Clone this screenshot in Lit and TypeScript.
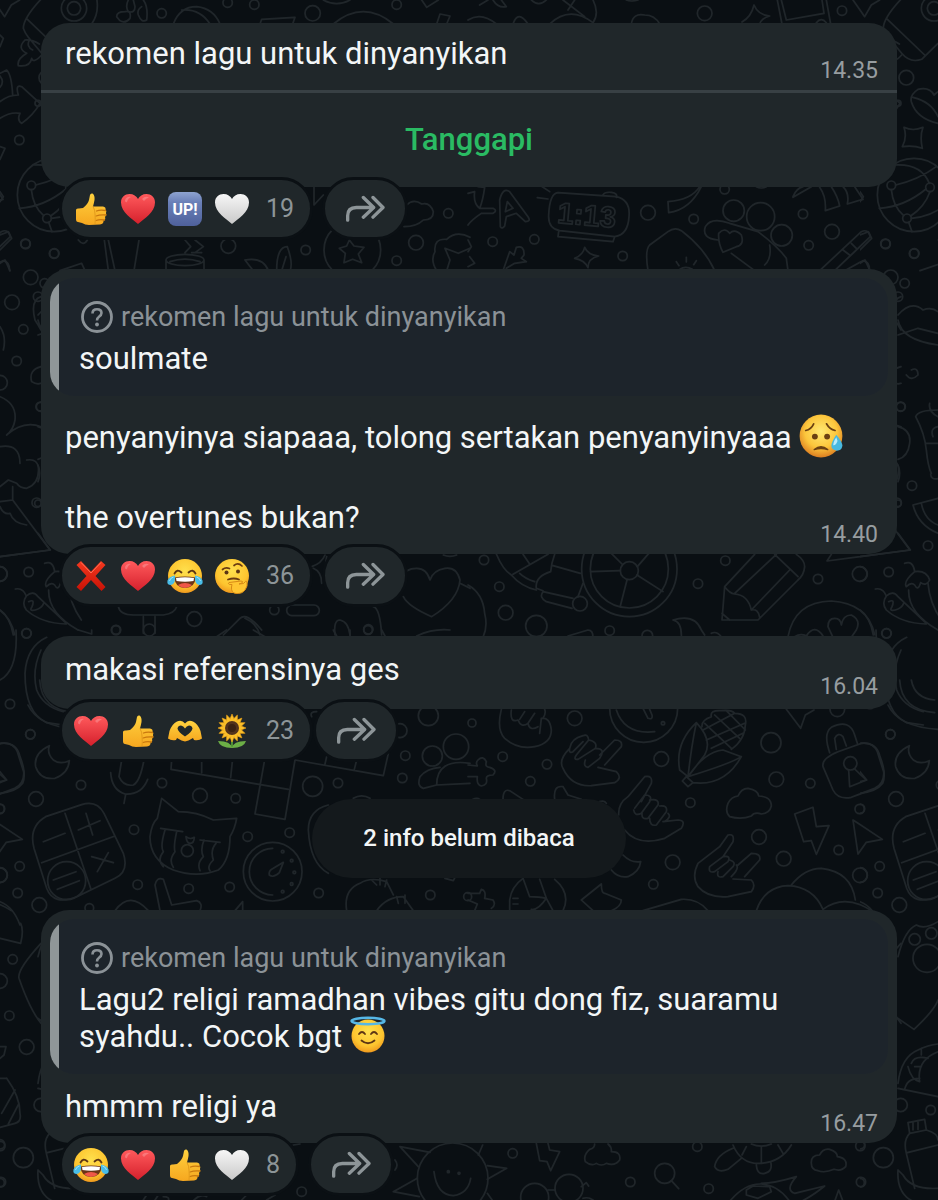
import { LitElement, html, svg, css, nothing } from "lit";
import { customElement, property } from "lit/decorators.js";

type Circle = [number, number, number];
interface DoodleSheet {
  x: number;
  y: number;
  circles: Circle[];
  paths: string[];
}

/* Line drawings of the chat wallpaper, in thirds of a pixel from each sheet's origin. */
const SHEETS: DoodleSheet[] = [
  {
    x: 0,
    y: 0,
    circles: [
      [222, 25, 38], [222, 25, 20], [485, 40, 14], [683, 8, 14], [763, 14, 14], [938, 40, 23], [1190, 14, 14],
      [58, 420, 14], [77, 732, 14], [163, 760, 14], [685, 738, 22], [917, 750, 14], [1248, 728, 22],
      [1190, 782, 14], [1345, 640, 14], [1057, 750, 85],
    ],
    paths: [
      "M140 -20 Q70 50 70 85 Q75 100 85 112 L125 160 Q150 190 185 178 L234 130 M79 55 L194 165 M290 -5 Q298 40 275 72",
      "M75 120 Q50 145 80 160 Q50 178 55 197 Q90 202 95 175 Q100 192 125 165 M88 120 Q78 140 98 150 M75 120 Q95 118 118 132",
      "M350 50 Q350 35 375 35 Q395 30 390 55 Q375 72 360 62Z M385 0 Q375 20 385 35 Q405 40 405 20 L400 0 M430 0 Q445 20 440 60 Q425 70 415 45 Q410 30 425 20",
      "M520 72 Q540 20 590 20 Q640 25 660 72 M545 30 Q600 25 630 72 M780 72 L785 58 L885 52 L878 72",
      "M970 0 Q1010 22 1050 0 M1000 72 Q1090 -2 1180 72 M1265 0 L1280 22 L1315 0 M1310 72 L1320 42 L1350 48 L1340 72",
      "M0 105 L10 115 L0 140 M0 220 L20 210 Q35 225 38 285 M0 228 Q14 245 0 262 M0 305 Q25 285 55 285 Q45 252 65 260 L120 310 Q100 345 65 370 Q50 360 60 340 Q30 335 0 355",
      "M0 440 L15 445 L0 478 M0 575 L10 590 L0 605 M0 705 L25 695 L35 715 L0 750 M235 720 Q250 740 262 720",
      "M313 720 L325 812 M325 720 L345 812 M417 720 L402 812 M180 812 L245 790 L255 812 M0 790 L15 780 L30 812",
      "M498 780 A57 17 0 0 1 612 780 A57 17 0 0 1 498 780 V812 M612 780 V812 M510 785 Q555 770 600 785 M555 720 L572 740 L555 758 M585 720 L610 740 L585 758 M575 758 H605",
      "M735 780 Q790 770 805 812 M735 780 Q750 800 760 812 M830 812 Q830 740 862 740 Q880 790 870 812 M845 812 L858 770",
      "M1048 720 L1062 738 L1092 742 L1075 762 L1085 788 L1058 778 L1032 788 L1036 760 L1018 745 L1040 738Z M942 562 V615 L970 585",
      "M1212 680 Q1250 680 1270 660 Q1300 660 1300 635 Q1290 605 1265 612 Q1240 595 1220 615",
      "M1310 812 Q1290 780 1305 755 Q1300 715 1340 718 Q1370 690 1410 712 M1340 812 L1350 780 L1335 745 L1375 760 L1410 745",
    ],
  },
  {
    x: 468,
    y: 0,
    circles: [
      [710, 40, 22], [1122, 32, 14], [1315, 233, 22], [1290, 310, 9], [1338, 585, 110], [1270, 556, 13],
      [1386, 562, 13], [1317, 655, 13], [540, 638, 22], [677, 657, 14], [770, 568, 14], [797, 632, 32],
      [878, 650, 42], [941, 706, 32], [1005, 642, 14], [1092, 695, 22], [1022, 736, 14], [1252, 731, 14],
      [1338, 761, 14], [464, 768, 14], [74, 725, 14], [199, 718, 14], [1310, 850, 14], [1290, 890, 14],
    ],
    paths: [
      "M75 0 Q90 25 115 20 L100 0 M35 15 L60 0 M0 60 Q40 35 85 72 M135 72 Q150 28 180 72 M190 0 Q212 22 235 0 M245 72 Q305 15 375 68 Q395 40 375 0 M285 0 L350 50 M300 30 L320 0",
      "M490 72 Q495 38 530 45 Q560 45 575 72 M475 0 Q490 6 510 0 M858 15 Q870 45 905 48 Q880 55 875 72 M858 15 Q850 50 822 66",
      "M928 0 L942 72 M940 0 L955 60 L1068 40 L1062 0 M1075 0 L1088 72 M1045 68 q15 -18 30 0 M1155 0 L1190 50 L1210 15 L1235 0",
      "M1410 275 L1398 285 Q1385 260 1350 268 Q1325 285 1330 305 Q1345 355 1410 370 M1335 292 Q1390 305 1410 350",
      "M1308 382 Q1335 395 1365 382 Q1355 410 1363 445 Q1335 435 1303 440 Q1318 412 1308 382Z",
      "M1283 555 Q1350 540 1405 500 M1270 569 Q1275 620 1307 647 M1386 575 Q1370 620 1328 648 M1234 625 Q1310 620 1374 567 M1280 495 Q1360 490 1384 550 M1322 667 L1332 695 M1330 655 Q1390 650 1440 610",
      "M0 580 L20 575 Q15 610 35 625 L75 625 Q90 632 75 640 L40 640 Q10 660 0 675 M30 560 L50 562 Q45 600 35 625",
      "M97 680 L95 600 Q105 560 125 575 L180 650 Q190 665 172 665 L145 640 L115 650 L110 678 Q103 688 97 680Z M118 605 L112 635 L135 625Z M215 555 L245 575 M208 593 L240 597",
      "M270 578 L445 590 Q488 600 483 650 Q480 705 440 710 L275 692 Q240 685 242 645 Q245 580 270 578Z M272 695 L270 710 L435 725 L440 710 M405 585 Q410 575 430 577 Q450 580 445 592",
      "M600 605 Q670 600 695 560 M600 605 L602 638 Q665 630 700 560 M975 590 Q985 565 1005 560 M975 592 L1030 560",
      "M1055 562 Q1075 590 1072 632 L1115 618 Q1110 590 1090 560 M1125 560 Q1145 580 1138 612 L1185 598 Q1170 575 1160 560 M865 560 Q880 568 895 560",
      "M540 812 Q530 750 545 735 L600 695 Q620 680 640 692 Q710 745 740 812 M625 785 l8 12 M655 772 v14 M685 782 l-8 12 M635 808 q18 -12 38 0",
      "M750 720 Q700 715 712 680 Q730 650 785 670 L870 695 Q930 740 955 775 L960 812 M765 757 Q750 730 752 700 Q770 680 785 700 Q800 685 820 705 Q830 735 805 740 Z M790 760 L860 812 M905 735 Q912 775 890 795",
      "M1055 812 L1180 695 Q1200 685 1207 710 L1100 812 M1125 750 L1145 765 M1150 730 L1165 745 M1130 812 L1185 782 Q1205 785 1205 812",
      "M0 720 L10 740 L0 755 M105 812 L125 755 L138 765 L145 742 Q170 735 168 765 L160 775 L175 785 L140 790 L115 805 M5 770 L20 790 L0 800",
      "M350 742 Q360 765 392 768 Q360 775 360 803 Q350 780 320 775 Q345 765 350 742Z",
      "M1290 945 Q1330 900 1365 930 Q1390 920 1410 935 M1290 960 Q1300 1020 1410 1035 M1290 1005 L1350 985 L1410 1000 M1330 1110 q20 -10 20 15 q-20 20 -35 0",
    ],
  },
  {
    x: 0,
    y: 270,
    circles: [
      [92, 22, 22], [36, 97, 22], [70, 178, 14], [50, 273, 14], [0, 338, 22], [122, 410, 13], [110, 698, 14],
      [0, 912, 22], [583, 1047, 22], [823, 1020, 14], [348, 1080, 14], [1105, 1078, 14],
    ],
    paths: [
      "M0 170 Q20 200 10 240 M0 380 Q50 400 45 450 Q40 480 20 495 Q70 450 123 470 M0 530 Q60 520 60 580 M80 570 Q110 565 115 590 Q120 640 80 655 Q60 655 50 640 L25 630 L0 650",
      "M38 650 V690 L150 840 L0 860 M0 695 L38 690 M0 710 Q10 735 30 730 Q40 760 80 765 M123 80 Q90 90 105 150 Q115 165 123 180 M123 290 Q85 300 95 335 Q110 345 123 340",
      "M355 1010 Q360 1035 400 1035 H490 Q525 1030 530 1010 M430 1040 V1090 M465 1040 V1090 M670 1095 L720 1045 Q740 1025 785 1080 M735 1045 Q770 1060 780 1095",
      "M876 1005 H942 A16 16 0 0 1 942 1037 H876 A16 16 0 0 1 876 1005Z M935 890 Q965 880 975 855 M940 895 Q965 905 965 940 M980 860 Q972 900 985 940",
      "M1120 1010 Q1140 1015 1145 1095 M1005 1095 Q1000 1050 1020 1050 Q1045 1055 1050 1095",
      "M1210 980 Q1225 1010 1295 1040 Q1375 990 1380 930 Q1370 890 1335 895 Q1300 900 1290 930 Q1280 895 1250 895 Q1215 895 1210 920 M1380 940 L1410 955 M1330 855 q20 8 40 0 M0 1020 Q30 1040 40 1095",
    ],
  },
  {
    x: 468,
    y: 400,
    circles: [
      [48, 480, 14], [94, 560, 14], [113, 638, 22], [205, 678, 32], [690, 551, 14], [772, 482, 14],
      [1050, 537, 14], [1175, 522, 22], [1262, 516, 14], [1380, 437, 14], [1332, 257, 14], [1298, 20, 14],
      [1290, 310, 10], [425, 692, 14], [538, 707, 16], [1255, 700, 14], [484, 512, 27], [484, 507, 143],
      [484, 507, 117], [336, 611, 22],
    ],
    paths: [
      "M457 512 L368 515 M508 500 L560 440 M507 525 L585 575 M477 540 L457 618 M462 492 L430 460",
      "M85 462 Q105 510 130 525 Q160 560 205 570 M135 523 L240 463 M165 463 L185 492 M155 520 Q170 535 200 545 M260 463 Q250 490 248 515 Q200 530 205 565 L225 572 M255 497 L337 520 M345 550 L330 590 M225 575 L315 595 M235 605 L312 625 M225 575 Q212 592 235 605",
      "M0 555 Q45 580 50 640 Q60 680 45 712 M300 708 L360 690 Q375 690 375 712 M615 660 Q680 640 700 690 L710 705 M615 660 Q642 665 640 712 M730 700 Q745 692 760 710",
      "M860 463 L770 560 L762 660 H870 Q930 600 990 540 M925 463 L800 580 M965 510 L850 630 M985 463 Q1010 480 1010 500 Q1008 525 990 540 M920 463 L990 530 M770 560 Q785 580 800 582 Q840 585 850 630 Q870 625 875 652 M762 640 L785 660",
      "M960 710 Q980 605 1090 603 Q1200 610 1220 704 M1095 712 L1080 680 Q1080 655 1100 655 Q1118 655 1120 675 Q1125 645 1150 645 Q1180 660 1165 690 L1150 712 M1015 708 Q1040 670 1065 708 M980 710 q20 -12 40 0",
      "M1290 400 L1327 450 L1077 483 L1090 463 M1410 295 L1335 315 Q1350 375 1410 400 M1360 310 Q1370 360 1410 375",
      "M1410 30 Q1350 30 1343 50 Q1370 100 1375 150 Q1380 200 1390 220 M1385 10 Q1380 35 1410 50 M1375 130 H1410 M1388 222 q0 18 22 14 M1410 80 q-25 5 -15 30 M1290 80 Q1330 90 1325 130 Q1320 170 1290 178 M1290 195 q10 25 0 50",
      "M1310 490 Q1335 480 1340 515 Q1305 545 1315 560 Q1330 545 1340 555 Q1350 575 1358 548 Q1375 560 1385 540 Q1375 510 1340 515 M1322 570 Q1320 640 1410 690 M1380 550 Q1385 610 1420 660",
      "M1222 567 Q1245 562 1255 588 Q1240 610 1255 630 Q1300 670 1375 672 M1255 588 Q1275 570 1290 590 L1375 670 M1262 605 q20 -10 10 15 q-10 15 10 10 q20 -5 25 -20",
    ],
  },
  {
    x: 0,
    y: 630,
    circles: [
      [80, 10, 14], [30, 222, 14], [91, 313, 14], [243, 465, 14], [108, 507, 22], [486, 459, 14], [600, 497, 22],
      [707, 505, 14], [402, 599, 14], [743, 620, 14], [869, 608, 14], [938, 469, 30], [1014, 459, 14],
      [1207, 444, 14], [1216, 377, 14], [1285, 257, 30], [1200, 302, 21], [0, 735, 22],
      [53, 789, 14], [413, 764, 14], [566, 776, 14], [689, 771, 14], [956, 789, 14],
      [1291, 795, 14], [1403, 800, 12], [0, 536, 14], [268, 834, 13], [348, 0, 13], [448, 0, 18], [1104, 0, 13],
      [200, 752, 57], [562, 662, 18], [818, 725, 88], [1297, 378, 30], [1368, 350, 38],
      [848, 665, 4], [875, 692, 4], [883, 727, 4], [875, 762, 4], [848, 785, 4],
    ],
    paths: [
      "M48 0 Q55 120 0 150 M140 22 Q80 50 75 130 Q75 250 140 278 L190 285 M123 60 Q95 120 110 180 Q130 230 190 245 M235 0 L275 12 V0 M650 20 L680 0 M760 0 L795 20 M1000 0 L1010 18 M1050 0 V18 M1145 0 L1155 18 M1250 18 Q1300 -5 1350 0",
      "M148 347 Q100 370 107 410 Q120 450 165 445 Q205 430 208 392 Q180 405 160 390 Q140 370 148 347Z M0 340 Q50 335 60 380 Q80 430 68 460 Q50 485 0 490 M0 425 L20 450 L0 455",
      "M365 390 L357 440 Q370 470 400 465 Q420 455 432 390 M332 428 Q335 480 375 492 Q425 495 443 448 M377 493 L372 520",
      "M137 560 L245 524 Q290 510 312 550 L370 670 Q388 725 345 745 L235 798 Q160 830 140 775 L102 655 Q85 590 137 560Z M195 550 L272 775 M125 698 L345 618 M130 635 L195 610 M235 600 L300 572 M258 550 L278 615 M275 680 L340 698 M325 668 L292 725 M160 750 L228 725 M172 778 L238 752",
      "M485 505 L535 545 Q590 545 640 570 L710 565 Q705 595 690 620 Q690 690 655 720 Q590 745 520 720 Q450 690 450 620 Q455 580 472 565Z M482 595 L548 605 M600 630 L660 637",
      "M495 600 Q480 650 490 665 Q470 690 490 710 M530 605 Q520 650 525 665 Q505 690 520 712 M612 630 Q600 660 610 680 Q590 700 600 722 M648 640 Q630 660 640 690 Q620 710 630 722 M558 620 Q570 630 583 622 Q582 640 570 640 Q560 640 558 620Z",
      "M515 390 L513 418 L865 478 M605 395 V428 M697 395 L692 442 M793 395 L765 552 L855 568 L885 390 L1150 437 L1165 370 M980 380 L975 402 M1070 390 L1063 418",
      "M818 655 A70 70 0 0 0 818 795 M850 697 L838 728 Q820 745 808 735 Q805 722 820 715Z M925 600 Q925 540 985 525 M925 600 Q930 700 985 730",
      "M480 842 L465 765 Q470 740 490 748 L515 825 L590 812 Q610 818 600 842 M345 842 Q390 780 445 842 M705 842 L728 815 V842",
      "M1040 842 Q1030 780 1080 760 Q1110 740 1160 755 L1180 795 M1130 842 Q1160 800 1210 800 L1240 842 M1115 750 L1130 765 M1140 745 V765 M1160 750 L1155 770 M1190 800 L1195 820 M1215 795 V820 M1335 745 L1360 752 L1365 742",
      "M1410 400 Q1310 385 1310 465 L1410 460 M1310 465 L1270 475 Q1250 470 1260 440 Q1280 415 1320 412 M0 815 Q40 830 60 885 M935 260 Q928 245 950 245 M1060 505 q25 -15 50 0",
    ],
  },
  {
    x: 468,
    y: 680,
    circles: [
      [12, 129, 12], [104, 230, 14], [237, 253, 14], [187, 304, 14], [320, 115, 22], [580, 237, 22], [667, 368, 14],
      [909, 188, 30], [925, 298, 22], [1027, 310, 14], [1267, 163, 14], [1175, 387, 14],
      [873, 471, 22], [947, 536, 22], [614, 547, 22], [556, 613, 14], [1112, 510, 14], [1176, 586, 22],
      [1235, 559, 14], [1294, 675, 22], [527, 85, 102], [585, 130, 5], [1108, 88, 22], [1147, 250, 20],
    ],
    paths: [
      "M100 88 Q85 150 110 175 Q150 210 200 200 Q250 190 250 150 Q245 110 220 115 L215 160 M130 90 Q125 130 150 120 Q160 145 180 130 Q185 155 210 140 M155 118 L170 95 M180 130 L200 100 M230 88 Q235 100 225 115",
      "M305 205 Q270 240 285 265 Q310 320 370 317 L440 308 Q465 295 445 275 L390 262 M395 225 L440 180 Q465 180 460 200 L410 255 M305 205 Q310 175 345 167 Q360 160 362 180 Q390 185 382 205 Q415 205 395 235 L360 262 Q345 260 352 240 M362 180 L325 225 Q315 240 330 238 L382 205 M345 185 L315 215 Q302 222 305 205",
      "M452 405 Q450 370 480 350 L530 290 Q555 285 550 310 L520 365 M470 450 Q510 500 590 475 L640 445 Q655 420 630 420 L585 425 M500 385 L530 345 Q555 345 545 365 L520 400 Q500 410 497 390 M545 360 Q575 355 570 375 L540 415 Q520 420 522 400 M575 378 Q600 375 595 395 L565 435 Q545 440 545 415 M600 400 Q612 410 590 425",
      "M755 500 L780 465 Q800 460 795 485 L765 530 M755 500 L690 550 Q670 590 690 620 Q720 655 780 650 L850 635 Q865 615 850 600 L795 597 M810 555 L850 520 Q880 520 875 540 L830 590 M765 530 Q790 525 780 545 L740 575 Q720 580 725 560Z M785 540 Q805 545 795 560 L765 590 Q745 595 750 575 M805 555 Q815 565 790 590",
      "M30 240 Q45 225 55 245 Q50 262 65 262 Q90 270 75 285 Q55 285 55 295 Q60 315 40 318 Q25 315 28 290 L0 290 M0 255 L28 258 Q22 248 30 240",
      "M685 128 Q620 190 635 270 L660 290 Q670 200 685 128Z M685 128 Q735 180 710 225 L660 290 Q710 215 765 210 L820 230 Q790 250 660 290 M820 230 Q770 320 675 308 L655 290 L643 303 L660 320 L675 308",
      "M702 140 Q700 120 730 110 Q725 90 760 92 Q790 88 800 100 Q840 100 832 135 Q830 180 790 208 M705 150 L800 100 M715 180 L830 130 M730 205 L825 160 M710 130 L790 205 M740 105 L815 175 M775 92 L832 150",
      "M955 88 L998 145 L1012 105 L1038 90 M1110 215 L1180 190 Q1215 185 1228 215 L1247 275 Q1250 310 1220 325 L1150 352 Q1110 360 1095 330 L1065 260 Q1060 235 1110 215Z",
      "M1085 218 Q1065 160 1090 142 Q1145 115 1160 165 L1168 190 M1105 208 L1100 175 Q1110 155 1125 170 L1135 198 M1142 270 L1145 320 L1195 300 L1160 267",
      "M1260 75 Q1290 140 1410 148 M1295 0 Q1300 90 1400 98 M1330 0 Q1340 55 1400 60 M445 90 Q470 165 560 155 M525 85 L540 115 Q555 120 552 105 L545 88",
      "M1155 420 L1243 478 L1195 487 L1170 522Z M980 402 L1035 382 L1045 440 L1083 437 L1045 523 L1030 482 L1007 485Z",
      "M780 370 Q790 350 810 348 Q820 325 840 325 Q870 330 872 348 Q910 350 910 378 Q905 400 880 402 Q860 395 850 408 Q820 420 785 410 Q770 395 780 370Z M430 570 Q450 595 480 590 Q515 575 518 545 Q490 550 465 525",
      "M105 358 Q105 325 125 332 L165 358 M260 358 Q255 315 285 320 L300 345 L340 358 M395 365 q15 -5 20 5 M15 358 q12 -6 20 0",
      "M0 640 L35 640 L40 628 Q55 630 50 655 L75 660 Q85 675 70 685 M0 660 L28 672 L20 692 M165 595 Q130 620 125 660 V692 M165 595 L185 650 Q215 650 235 655 L255 692 M215 598 L235 655 Q210 692 190 688 M260 598 Q310 640 285 692 M135 655 h15 M135 672 h15",
      "M340 660 L400 612 Q400 640 410 640 L460 660 Q460 680 430 692 M340 660 L375 692 M525 692 L640 658 Q690 655 720 692 M865 692 Q890 620 960 617 Q1035 620 1065 688 Q1130 640 1210 692 M970 615 Q1010 565 1060 565 Q1150 575 1162 660",
    ],
  },
  {
    x: 0,
    y: 900,
    circles: [
      [38, 178, 14], [0, 243, 22], [28, 347, 14], [80, 441, 22], [0, 733, 14], [0, 848, 13],
      [905, 875, 14], [1358, 835, 106], [1345, 815, 3], [1377, 820, 3],
    ],
    paths: [
      "M62 70 Q72 90 62 130 L0 115 M123 130 Q50 210 57 235 Q90 330 123 370 M0 440 H18 L12 465 L0 475 M20 535 Q60 590 60 640 Q65 665 45 670 L0 682 M0 535 L20 535 M45 570 L5 640 M57 610 L25 672",
      "M430 900 L440 885 M465 900 L475 885 M490 890 q20 0 15 12 M580 902 Q600 880 620 890 M725 900 L740 885 M800 900 L825 885",
      "M1200 740 L1290 757 M1200 740 L1255 800 M1180 875 L1252 835 M1180 875 L1258 890 M1462 797 L1520 805 L1462 838 M1435 765 L1448 735 M1462 880 L1480 905 M1302 815 Q1310 885 1360 887 Q1405 880 1412 835 M1185 780 q12 15 0 30 M880 735 l20 -3",
    ],
  },
  {
    x: 468,
    y: 900,
    circles: [
      [134, 760, 14], [688, 740, 14], [487, 846, 14], [722, 866, 14], [1177, 738, 14], [1179, 846, 14],
      [1246, 773, 30], [1388, 630, 14], [1340, 118, 17], [1390, 100, 17], [1377, 175, 42], [1298, 615, 20],
      [590, 820, 30], [200, 892, 42], [303, 865, 42],
    ],
    paths: [
      "M205 730 L215 782 L237 785 L248 812 L275 755 L245 750 L240 730 M380 732 Q380 745 365 748 Q345 765 352 785 Q370 800 385 790 Q400 800 415 790 Q440 800 455 780 Q460 755 430 755 Q432 742 420 732",
      "M1030 790 Q1028 765 1055 765 Q1065 745 1085 748 Q1108 755 1108 770 Q1140 775 1133 800 Q1120 815 1098 808 Q1070 820 1050 812 Q1030 810 1030 790Z M610 842 L632 866",
      "M795 735 Q820 795 880 790 Q940 785 970 735 M740 800 Q745 765 795 745 M740 800 Q750 820 780 808 L820 775 M865 790 Q865 825 890 820 Q915 815 908 785 M880 740 V790 M850 732 Q880 745 910 732 M930 735 L945 760 M835 740 L822 765",
      "M240 870 L262 870 M340 860 L355 848 L362 858 M345 895 Q360 890 375 900 M785 904 Q830 850 880 852 Q930 855 965 904 M835 870 L855 858 L905 860 L910 875 L870 895 L835 885Z",
      "M880 850 Q920 850 985 830 Q950 870 980 880 L1070 858 Q1030 890 1000 904 M1100 904 L1112 870 L1125 904 M1290 170 Q1310 90 1345 75 Q1370 90 1410 65 M1290 355 L1338 388 Q1400 330 1410 300",
      "M1290 550 Q1300 470 1350 450 Q1380 435 1410 432 M1360 445 V465 M1330 490 Q1340 465 1380 475 M1320 500 Q1330 540 1355 545 Q1345 480 1410 455 M1290 565 L1410 590 M1310 570 Q1315 535 1355 535 M1340 500 h20",
      "M1320 668 L1370 658 L1375 690 L1325 700Z M1335 665 V690 M1350 662 V688 M1325 700 Q1305 720 1315 760 L1340 865 M1375 690 Q1410 700 1410 720 M1318 758 L1410 735 M1290 810 L1305 825 Q1330 870 1410 865 M1290 810 Q1285 890 1350 910",
    ],
  },
];

@customElement("chat-wallpaper")
class ChatWallpaper extends LitElement {
  static styles = css`
    :host {
      display: block;
    }
    .canvas {
      display: block;
      width: 100%;
      height: 100%;
    }
    .ink {
      fill: none;
      stroke: #20262a;
      stroke-width: 5;
      stroke-linecap: round;
      stroke-linejoin: round;
    }
    .digits {
      font: 700 88px "Liberation Sans", Arial, sans-serif;
    }
  `;

  render() {
    return html`<svg class="canvas" aria-hidden="true">
      <defs>
        <pattern id="doodles" width="860" height="1200" patternUnits="userSpaceOnUse">
          <g id="sheet" class="ink">
            ${SHEETS.map(
              (s) => svg`<g transform=${`translate(${s.x} ${s.y}) scale(0.33333)`}>
                ${s.circles.map(([x, y, r]) => svg`<circle cx=${x} cy=${y} r=${r}></circle>`)}
                <path d=${s.paths.join(" ")}></path>
              </g>`
            )}
            <g transform="translate(468 0) scale(0.33333)">
              <text class="digits" transform="translate(266 668) rotate(5)">1:13</text>
            </g>
          </g>
          <use href="#sheet" x="-860"></use>
        </pattern>
      </defs>
      <rect width="100%" height="100%" fill="url(#doodles)"></rect>
    </svg>`;
  }
}

const HEART = "M18 33 C12 28 1 21 1 11.500 C1 6 5 3 9.500 3 C13.500 3 16.500 5 18 8 C19.500 5 22.500 3 26.500 3 C31 3 35 6 35 11.500 C35 21 24 28 18 33Z";

const GLYPHS: Record<string, { label: string; art: unknown }> = {
  heart: {
    label: "❤️",
    art: svg`<path d=${HEART} fill="url(#red)"></path>
      <path d="M5 9 Q7 5 11 6 Q8 7 7 11 Q5 12 5 9Z M22 8 Q25 4.500 29 6.500 Q26 7 24 10Z" fill="#fff" opacity=".22"></path>`,
  },
  white: {
    label: "🤍",
    art: svg`<path d=${HEART} fill="url(#pale)"></path>`,
  },
  up: {
    label: "🆙",
    art: svg`<rect x="1" y="1" width="34" height="34" rx="8" fill="url(#blue)"></rect>
      <text class="up" x="18" y="24" text-anchor="middle">UP!</text>`,
  },
  thumb: {
    label: "👍",
    art: svg`<path d="M3 19 Q3 17 6 17.500 L10 17 Q15 13 16 9 L17 4 Q17.500 2 19.500 2.500 Q22 4 21.500 9 Q21 12 20 15.500 L30 15.500 Q33 16 32.500 18.500 Q34 19.500 33 22 Q34 24 32 26 Q33 28.500 30.500 29.500 Q31 33 27 33.500 L16 34 Q12 34 9 32 L5 31 Q3 31 3 28Z" fill="url(#skin)"></path>
      <path d="M32.500 19.500 Q27 18.500 23.500 20 M33 24 Q27 23.500 23 25 M31.500 29 Q27 28 23 29.500" fill="none" stroke="#c9780e" stroke-width="1.300" stroke-linecap="round"></path>
      <path d="M20 15.500 Q22 19 22 23 Q22.500 29 22 33" fill="none" stroke="#e39b1c" stroke-width="1"></path>`,
  },
  cross: {
    label: "❌",
    art: svg`<path d="M3.500 7 L8 3 L18 13.500 L28 3 L32.500 7 L22.500 18 L32.500 29 L28.500 33 L18 22 L8 33 L3.500 29 L13.500 18Z" fill="url(#cross)"></path>
      <path d="M8 4.500 L18 15 L28 4.500" fill="none" stroke="#ff7358" stroke-width="1"></path>`,
  },
  joy: {
    label: "😂",
    art: svg`<circle cx="18" cy="18" r="17" fill="url(#face)"></circle>
      <path d="M7.500 15.500 Q10 10.500 14.500 14.500 M21.500 14.500 Q26 10.500 28.500 15.500" fill="none" stroke="#5c3514" stroke-width="1.800" stroke-linecap="round"></path>
      <path d="M7.500 19.500 Q18 17.500 28.500 19.500 Q28 30 18 30 Q8 30 7.500 19.500Z" fill="#6b3416"></path>
      <path d="M9 20 Q18 18.500 27 20 L26.500 23 Q18 24.500 9.500 23Z" fill="#fff"></path>
      <path d="M11 27 Q18 23 25 27 Q22 30 18 30 Q14 30 11 27Z" fill="#ef5747"></path>
      <path d="M8 17.500 Q9 26 4 27 Q-.5 27 .5 22.500 Q2 18.500 8 17.500Z M28 17.500 Q27 26 32 27 Q36.500 27 35.500 22.500 Q34 18.500 28 17.500Z" fill="#49bde8"></path>
      <path d="M6.500 19 Q3 20 2.500 23 M29.500 19 Q33 20 33.500 23" fill="none" stroke="#a5e4fa" stroke-width="1"></path>`,
  },
  think: {
    label: "🤔",
    art: svg`<circle cx="18" cy="18" r="17" fill="url(#face)"></circle>
      <path d="M8.500 11.500 Q11.500 9 15.500 10.500 M20 7.500 Q24 4 28 8" fill="none" stroke="#6b3c12" stroke-width="1.700" stroke-linecap="round"></path>
      <circle cx="12.500" cy="14.500" r="2" fill="#5c3514"></circle><circle cx="24" cy="13.500" r="2" fill="#5c3514"></circle>
      <path d="M14 21.500 Q20 19.500 25 21.500" fill="none" stroke="#6b3c12" stroke-width="1.800" stroke-linecap="round"></path>
      <path d="M15 24.500 L27 23 Q29.500 23 28 25 L25 26 L29.500 25.500 Q32 22 33 24 Q34 28 31 32 Q28 36 22 35.500 Q17 35 17.500 29 L18 26.500 L15.500 26.500 Q13.500 25.500 15 24.500Z" fill="#ffc531" stroke="#d88a16" stroke-width="1"></path>`,
  },
  hands: {
    label: "🫶",
    art: svg`<path d="M1 25.500 L2.500 18 Q5 11 10 8.500 Q15 6.500 18 10.500 Q21 6.500 26 8.500 Q31 11 33.500 18 L35 25.500 Q32 28 27 27 L26 25 L21.500 27.500 L18 28.500 L14.500 27.500 L10 25 L9 27 Q4 28 1 25.500Z M18 23.500 Q25 19 25.500 15.500 Q25 12.500 22 12.500 Q19.500 13 18 15.500 Q16.500 13 14 12.500 Q11 12.500 10.500 15.500 Q11 19 18 23.500Z" fill="url(#skin)" fill-rule="evenodd"></path>`,
  },
  sunflower: {
    label: "🌻",
    art: svg`<path d="M18 20 V35" stroke="#4f8f35" stroke-width="2"></path>
      <path d="M18 35 Q17 28 4 28 Q6 35 18 35Z M18 35 Q19 28 32 28 Q30 35 18 35Z" fill="#6cae46"></path>
      ${Array.from({ length: 16 }, (_, i) => svg`<path d="M15.500 7 L18 1 L20.500 7Z" transform=${`rotate(${i * 22.5} 18 15)`} fill="#fbc02d" stroke="#e9a013" stroke-width=".6"></path>`)}
      <circle cx="18" cy="15" r="9" fill="#fbbf28"></circle>
      <circle cx="18" cy="15" r="7" fill="#53331c"></circle><circle cx="18" cy="15" r="4" fill="#3a2212"></circle>`,
  },
  sad: {
    label: "😥",
    art: svg`<circle cx="18" cy="18" r="17.500" fill="url(#worry)"></circle>
      <path d="M5.500 13.500 Q10 12.500 12 8 M22.500 8 Q25 12.500 29.500 13.500" fill="none" stroke="#6b4012" stroke-width="1.400" stroke-linecap="round"></path>
      <circle cx="13" cy="18.500" r="2.400" fill="#6b4012"></circle><circle cx="23" cy="18.500" r="2.400" fill="#6b4012"></circle>
      <path d="M12.500 29 Q18 24.500 23.500 29 Q18 27.500 12.500 29Z" fill="#6b4012" stroke="#6b4012" stroke-width="1.200" stroke-linejoin="round"></path>
      <path d="M30.500 17 Q35.500 23 35.500 26 Q35 30 31 30 Q26.500 29.500 26.500 26 Q26.500 23 30.500 17Z" fill="#48b9e0"></path>
      <path d="M30.500 19 Q28 23 28 25.500 Q30 26 31.500 22Z" fill="#b9ecfb"></path>`,
  },
  angel: {
    label: "😇",
    art: svg`<circle cx="18" cy="19" r="16.500" fill="url(#face)"></circle>
      <ellipse cx="18" cy="4" rx="16.500" ry="3.200" fill="none" stroke="#56b7e6" stroke-width="2.400"></ellipse>
      <path d="M9 17 Q12 13 15 17 M21 17 Q24 13 27 17" fill="none" stroke="#5c3514" stroke-width="1.800" stroke-linecap="round"></path>
      <path d="M11.500 23.500 Q18 29 24.500 23.500" fill="none" stroke="#5c3514" stroke-width="1.800" stroke-linecap="round"></path>`,
  },
};

@customElement("chat-emoji")
class ChatEmoji extends LitElement {
  static styles = css`
    :host {
      display: inline-block;
      width: 36px;
      height: 36px;
    }
    .art {
      display: block;
      width: 100%;
      height: 100%;
      overflow: visible;
    }
    .up {
      font: 700 16px Roboto, sans-serif;
      fill: #fff;
    }
  `;

  @property() name = "heart";

  render() {
    const glyph = GLYPHS[this.name];
    return html`<svg class="art" viewBox="0 0 36 36" role="img" aria-label=${glyph.label}>
      <defs>
        <linearGradient id="red" x1="0" y1="0" x2="0" y2="1">
          <stop offset="0" stop-color="#ff5a5c"></stop><stop offset="1" stop-color="#d5202c"></stop>
        </linearGradient>
        <linearGradient id="cross" x1="0" y1="0" x2="0" y2="1">
          <stop offset="0" stop-color="#f5391f"></stop><stop offset="1" stop-color="#c81206"></stop>
        </linearGradient>
        <linearGradient id="pale" x1="0" y1="0" x2="0" y2="1">
          <stop offset="0" stop-color="#f6f6f6"></stop><stop offset="1" stop-color="#c9c9c9"></stop>
        </linearGradient>
        <linearGradient id="blue" x1="0" y1="0" x2="0" y2="1">
          <stop offset="0" stop-color="#8ea3d0"></stop><stop offset=".3" stop-color="#6a80b8"></stop><stop offset="1" stop-color="#4f619c"></stop>
        </linearGradient>
        <linearGradient id="skin" x1="0" y1="0" x2="0" y2="1">
          <stop offset="0" stop-color="#ffd23f"></stop><stop offset="1" stop-color="#f6a71f"></stop>
        </linearGradient>
        <radialGradient id="face" cx=".5" cy=".35" r=".65">
          <stop offset="0" stop-color="#ffe04d"></stop><stop offset=".7" stop-color="#fdc52f"></stop><stop offset="1" stop-color="#f09a1e"></stop>
        </radialGradient>
        <radialGradient id="worry" cx=".5" cy=".4" r=".62">
          <stop offset="0" stop-color="#ffe873"></stop><stop offset=".6" stop-color="#fcc63c"></stop><stop offset="1" stop-color="#d9781f"></stop>
        </radialGradient>
      </defs>
      ${glyph.art}
    </svg>`;
  }
}

interface Message {
  quote?: unknown;
  lines: unknown[];
  time: string;
  action?: string;
  reactions: string[];
  count: number;
  roomy?: boolean;
  close?: boolean;
}

@customElement("chat-message")
class ChatMessage extends LitElement {
  static styles = css`
    :host {
      display: block;
    }
    .bubble {
      background: #20272a;
      border-radius: 28px;
      overflow: hidden;
    }
    .quote {
      margin: 9px 9px 0;
      padding: 21px 20px 19px 29px;
      border-radius: 24px;
      background: linear-gradient(to right, #8f9698 9px, #1d242b 9px);
    }
    .source {
      display: flex;
      align-items: center;
      gap: 8px;
      margin: 0;
      color: #8b9297;
      font-size: 27px;
      line-height: 36px;
    }
    .question {
      width: 34px;
      height: 34px;
      flex: none;
    }
    .answer {
      margin: 5px 0 0;
      font-size: 31px;
      line-height: 37px;
    }
    .answer chat-emoji,
    .text chat-emoji {
      vertical-align: middle;
      margin: -8px 0 0;
    }
    .body {
      display: grid;
      padding: 14px 19px 19px 24px;
    }
    .body.compact {
      padding-top: 11px;
      padding-bottom: 16px;
    }
    .body.quoted {
      padding-top: 13px;
      padding-bottom: 16px;
    }
    .body.roomy {
      padding-top: 22px;
    }
    .text {
      grid-area: 1 / 1;
      margin: 0;
      font-size: 31px;
      line-height: 40px;
    }
    .line {
      display: block;
      min-height: 40px;
    }
    .text chat-emoji {
      width: 44px;
      height: 44px;
    }
    .time {
      grid-area: 1 / 1;
      align-self: end;
      justify-self: end;
      color: #979da0;
      font-size: 23px;
      line-height: 28px;
      margin-bottom: -11px;
    }
    .action {
      display: block;
      width: 100%;
      height: 97px;
      padding: 0;
      border: 0;
      border-top: 3px solid #384044;
      background: none;
      color: #2abb63;
      font: 500 31px/40px Roboto, sans-serif;
    }
    .reactions {
      display: flex;
      gap: 9px;
      margin: -10px 18px 0;
      position: relative;
    }
    .close {
      gap: 0;
    }
    .pill {
      display: flex;
      align-items: center;
      gap: 11px;
      height: 63px;
      box-sizing: border-box;
      padding: 0 16px 0 11px;
      border: 3px solid #0b1014;
      border-radius: 32px;
      background: #20272a;
      color: #8d9598;
      font: 400 25px/30px Roboto, sans-serif;
    }
    .count {
      padding-left: 5px;
    }
    .forward {
      width: 86px;
      padding: 0;
      justify-content: center;
    }
    .arrows {
      width: 40px;
      height: 27px;
    }
  `;

  @property({ attribute: false }) message!: Message;

  render() {
    const m = this.message;
    const spacing = `${m.action ? "compact" : ""} ${m.quote ? "quoted" : ""} ${m.roomy ? "roomy" : ""}`;
    return html`
      <article class="bubble">
        ${m.quote
          ? html`<div class="quote">
              <p class="source">
                <svg class="question" viewBox="0 0 34 34" aria-hidden="true" fill="none" stroke="#8b9297">
                  <circle cx="18" cy="17" r="14.500" stroke-width="2.800"></circle>
                  <path d="M13.500 13.500 Q13.500 9.200 18 9.200 Q22.500 9.200 22.500 13 Q22.500 15 20 16.800 Q18 18.200 18 20.500" stroke-width="2.600"></path>
                  <circle cx="18" cy="24.500" r="1.900" fill="#8b9297" stroke="none"></circle>
                </svg>
                <span>rekomen lagu untuk dinyanyikan</span>
              </p>
              <p class="answer">${m.quote}</p>
            </div>`
          : nothing}
        <div class="body ${spacing}">
          <p class="text">${m.lines.map((line) => html`<span class="line">${line}</span>`)}</p>
          <time class="time">${m.time}</time>
        </div>
        ${m.action ? html`<button class="action" type="button">${m.action}</button>` : nothing}
      </article>
      <div class="reactions ${m.close ? "close" : ""}">
        <button class="pill" type="button">
          ${m.reactions.map((name) => html`<chat-emoji name=${name}></chat-emoji>`)}
          <span class="count">${m.count}</span>
        </button>
        <button class="pill forward" type="button" aria-label="Teruskan">
          <svg class="arrows" viewBox="0 0 120 80" aria-hidden="true" fill="none" stroke="#8d9598" stroke-width="10" stroke-linecap="round" stroke-linejoin="round">
            <path d="M8 75 V62 Q8 37 34 37 H84 M55 7 L86 37 L55 66 M84 7 L114 37 L84 66"></path>
          </svg>
        </button>
      </div>
    `;
  }
}

@customElement("app-root")
class AppRoot extends LitElement {
  static styles = css`
    :host {
      display: block;
      position: relative;
      min-height: 100vh;
      overflow: hidden;
      box-sizing: border-box;
      background: #0a0f13;
      color: #f3f6f7;
      font-family: Roboto, sans-serif;
    }
    .wallpaper {
      position: absolute;
      inset: 0;
    }
    .thread {
      position: relative;
      display: flex;
      flex-direction: column;
      gap: 29px;
      padding: 23px 41px 4px;
    }
    .unread {
      align-self: center;
      margin: 8px 0 3px;
      padding: 0 51px;
      border-radius: 40px;
      background: #14191c;
      font-size: 24px;
      font-weight: 500;
      line-height: 79px;
    }
  `;

  private before: Message[] = [
    {
      lines: ["rekomen lagu untuk dinyanyikan"],
      time: "14.35",
      action: "Tanggapi",
      reactions: ["thumb", "heart", "up", "white"],
      count: 19,
    },
    {
      quote: "soulmate",
      lines: [
        html`penyanyinya siapaaa, tolong sertakan penyanyinyaaa <chat-emoji name="sad"></chat-emoji>`,
        "",
        "the overtunes bukan?",
      ],
      time: "14.40",
      reactions: ["cross", "heart", "joy", "think"],
      count: 36,
      roomy: true,
    },
    {
      lines: ["makasi referensinya ges"],
      time: "16.04",
      reactions: ["heart", "thumb", "hands", "sunflower"],
      count: 23,
      close: true,
    },
  ];

  private after: Message[] = [
    {
      quote: html`Lagu2 religi ramadhan vibes gitu dong fiz, suaramu syahdu.. Cocok bgt <chat-emoji name="angel"></chat-emoji>`,
      lines: ["hmmm religi ya"],
      time: "16.47",
      reactions: ["joy", "heart", "thumb", "white"],
      count: 8,
    },
  ];

  render() {
    return html`
      <chat-wallpaper class="wallpaper"></chat-wallpaper>
      <main class="thread">
        ${this.before.map((m) => html`<chat-message .message=${m}></chat-message>`)}
        <div class="unread">2 info belum dibaca</div>
        ${this.after.map((m) => html`<chat-message .message=${m}></chat-message>`)}
      </main>
    `;
  }
}
